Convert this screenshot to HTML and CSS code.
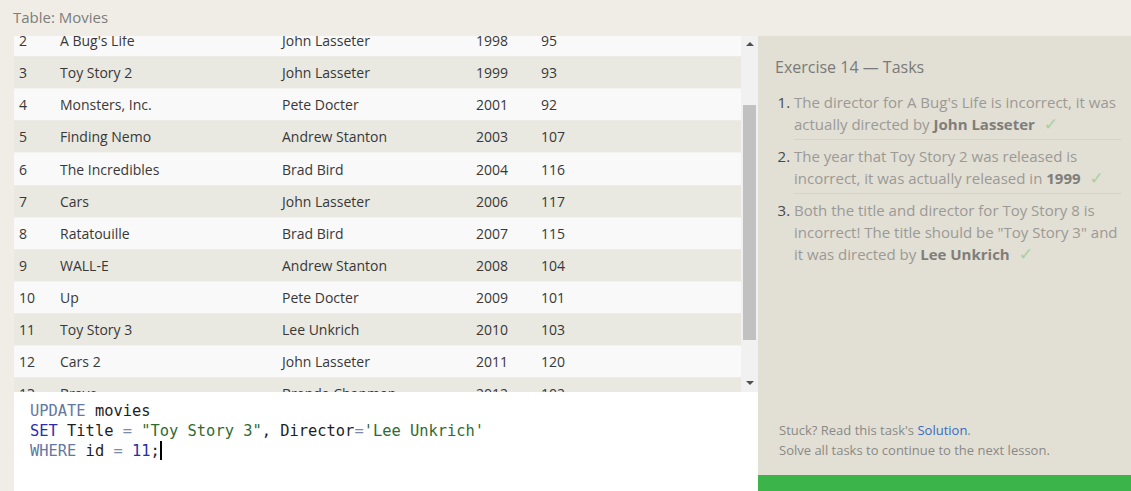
FILE: index.html
```html
<!DOCTYPE html>
<html>
<head>
<meta charset="utf-8">
<link rel="stylesheet" href="styles.css">
</head>
<body>
<div class="page">
  <div class="header">Table: Movies</div>
  <div class="main">
    <div class="left">
      <div class="table-wrap">
        <div class="table-view">
          <div class="rows">
            <div class="row odd"><span>1</span><span>Toy Story</span><span>John Lasseter</span><span>1995</span><span>81</span></div>
            <div class="row"><span>2</span><span>A Bug's Life</span><span>John Lasseter</span><span>1998</span><span>95</span></div>
            <div class="row odd"><span>3</span><span>Toy Story 2</span><span>John Lasseter</span><span>1999</span><span>93</span></div>
            <div class="row"><span>4</span><span>Monsters, Inc.</span><span>Pete Docter</span><span>2001</span><span>92</span></div>
            <div class="row odd"><span>5</span><span>Finding Nemo</span><span>Andrew Stanton</span><span>2003</span><span>107</span></div>
            <div class="row"><span>6</span><span>The Incredibles</span><span>Brad Bird</span><span>2004</span><span>116</span></div>
            <div class="row odd"><span>7</span><span>Cars</span><span>John Lasseter</span><span>2006</span><span>117</span></div>
            <div class="row"><span>8</span><span>Ratatouille</span><span>Brad Bird</span><span>2007</span><span>115</span></div>
            <div class="row odd"><span>9</span><span>WALL-E</span><span>Andrew Stanton</span><span>2008</span><span>104</span></div>
            <div class="row"><span>10</span><span>Up</span><span>Pete Docter</span><span>2009</span><span>101</span></div>
            <div class="row odd"><span>11</span><span>Toy Story 3</span><span>Lee Unkrich</span><span>2010</span><span>103</span></div>
            <div class="row"><span>12</span><span>Cars 2</span><span>John Lasseter</span><span>2011</span><span>120</span></div>
            <div class="row odd"><span>13</span><span>Brave</span><span>Brenda Chapman</span><span>2012</span><span>102</span></div>
            <div class="row"><span>14</span><span>Monsters University</span><span>Dan Scanlon</span><span>2013</span><span>110</span></div>
          </div>
        </div>
        <div class="scrollbar">
          <div class="arrow up"></div>
          <div class="track"><div class="thumb"></div></div>
          <div class="arrow down"></div>
        </div>
      </div>
      <div class="editor">
        <div class="code-line"><span class="kw">UPDATE</span> movies</div>
        <div class="code-line"><span class="kw2">SET</span> Title <span class="op">=</span> <span class="str">"Toy Story 3"</span>, Director<span class="op">=</span><span class="str">'Lee Unkrich'</span></div>
        <div class="code-line"><span class="kw">WHERE</span> id <span class="op">=</span> <span class="num">11</span>;<span class="cursor"></span></div>
      </div>
    </div>
    <div class="right">
      <div class="tasks">
        <div class="tasks-title">Exercise 14 — Tasks</div>
        <ol class="task-list">
          <li>The director for A Bug's Life is incorrect, it was actually directed by <b>John Lasseter</b> <span class="check">✓</span></li>
          <li>The year that Toy Story 2 was released is incorrect, it was actually released in <b>1999</b> <span class="check">✓</span></li>
          <li>Both the title and director for Toy Story 8 is incorrect! The title should be "Toy Story 3" and it was directed by <b>Lee Unkrich</b> <span class="check">✓</span></li>
        </ol>
      </div>
      <div class="help">
        <div>Stuck? Read this task's <a class="link">Solution</a>.</div>
        <div>Solve all tasks to continue to the next lesson.</div>
      </div>
      <div class="progress"></div>
    </div>
  </div>
</div>
</body>
</html>
```

FILE: styles.css
```css
* { box-sizing: border-box; }
html, body { margin: 0; padding: 0; }
body {
  background: #efede6;
  font-family: "Open Sans", "Liberation Sans", sans-serif;
  color: #333;
}
.page {
  width: 1131px;
  height: 491px;
  display: flex;
  flex-direction: column;
  overflow: hidden;
}
.header {
  height: 36px;
  padding-left: 13px;
  font-size: 15px;
  line-height: 34px;
  color: #7d7d7d;
}
.main {
  flex: 1;
  display: flex;
  min-height: 0;
}
.left {
  width: 744px;
  margin-left: 14px;
  display: flex;
  flex-direction: column;
}
.table-wrap {
  height: 356px;
  display: flex;
}
.table-view {
  flex: 1;
  overflow: hidden;
  background: #f9f9f9;
}
.rows {
  margin-top: -43px;
}
.row {
  height: 32.1px;
  display: grid;
  grid-template-columns: 41px 222px 194px 65px 1fr;
  align-items: center;
  padding-left: 5px;
  font-size: 14px;
  color: #383838;
  background: #f9f9f9;
  border-bottom: 1px solid #ecebe6;
}
.row.odd {
  background: #e9e8e1;
  border-bottom-color: #f3f2ee;
}
.scrollbar {
  width: 17px;
  background: #f1f1f1;
  display: flex;
  flex-direction: column;
  align-items: center;
}
.arrow {
  width: 0;
  height: 0;
  border-left: 4px solid transparent;
  border-right: 4px solid transparent;
}
.arrow.up {
  margin-top: 6px;
  border-bottom: 4px solid #505050;
}
.arrow.down {
  margin-bottom: 7px;
  border-top: 4px solid #505050;
}
.track {
  flex: 1;
  width: 100%;
  padding: 59px 2px 0;
}
.thumb {
  height: 235px;
  background: #c1c1c1;
}
.editor {
  flex: 1;
  background: #fff;
  padding: 9px 0 0 16px;
  font-family: "DejaVu Sans Mono", "Liberation Mono", monospace;
  font-size: 15.4px;
  line-height: 20px;
  color: #1e1e1e;
}
.code-line { white-space: pre; }
.kw { color: #6478a2; }
.kw2 { color: #2b2bb0; }
.op { color: #7b8aa8; }
.str { color: #2f6b2f; }
.num { color: #1f2fa6; }
.cursor {
  display: inline-block;
  width: 2px;
  height: 19px;
  background: #000;
  vertical-align: -4px;
}
.right {
  flex: 1;
  background: #e2dfd5;
  display: flex;
  flex-direction: column;
}
.tasks {
  flex: 1;
  padding: 20px 10px 0 17px;
}
.tasks-title {
  font-size: 16px;
  line-height: 22px;
  color: #7a7a78;
}
.task-list {
  margin: 13px 0 0;
  padding-left: 19px;
  font-size: 15px;
  line-height: 22px;
  color: #9b9a95;
}
.task-list li {
  padding: 0 0 4px;
  border-bottom: 1px solid #d6d3ca;
  margin-bottom: 5px;
}
.task-list li:last-child { border-bottom: none; }
.task-list li::marker {
  color: #4a4a48;
}
.task-list b {
  color: #7f7e7a;
  font-weight: 700;
}
.check {
  color: #a9cfa1;
  margin-left: 5px;
  font-family: "DejaVu Sans", sans-serif;
  font-size: 17px;
  line-height: 0;
}
.help {
  padding: 0 0 15px 21px;
  font-size: 13px;
  line-height: 20px;
  color: #8a8985;
}
.link { color: #3a6bc0; }
.progress {
  height: 16px;
  background: #3bb54a;
}
```
